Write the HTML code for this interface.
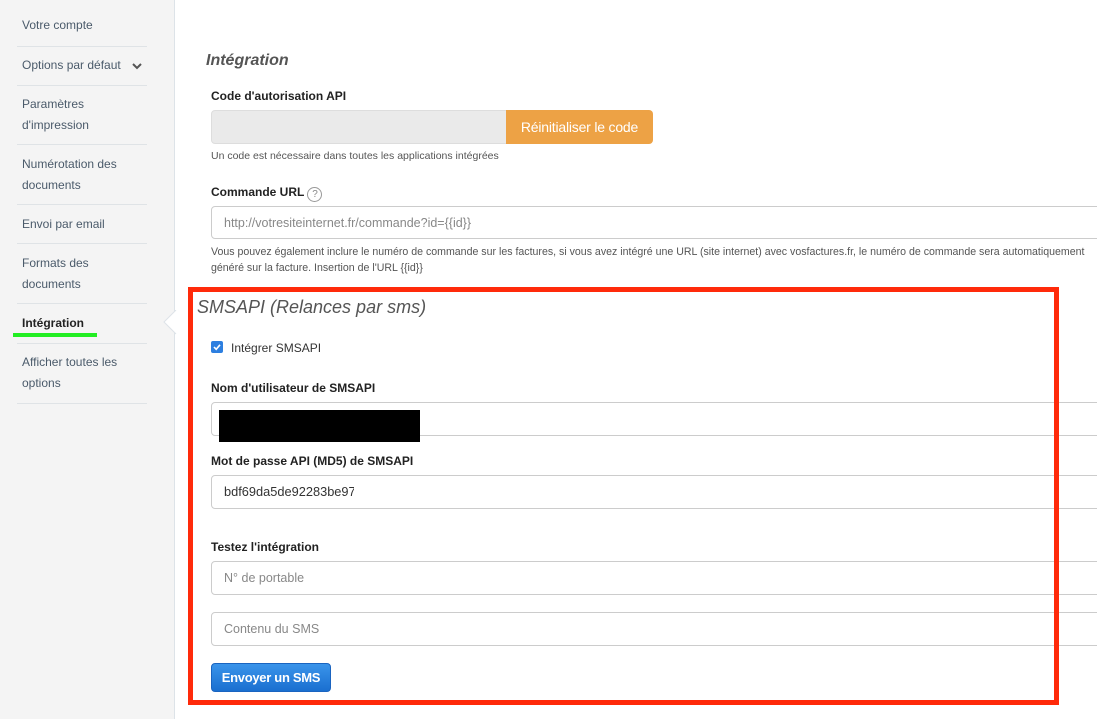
<!DOCTYPE html>
<html><head><meta charset="utf-8"><style>
*{box-sizing:border-box;margin:0;padding:0}
body{width:1097px;height:719px;overflow:hidden;background:#fff;font-family:"Liberation Sans",Arial,sans-serif;position:relative;color:#333}
.sb{position:absolute;left:0;top:0;width:175px;height:719px;background:#f4f4f4;border-right:1px solid #dde3e8}
.it{position:absolute;left:17px;width:130px;border-bottom:1px solid #dfe3e6;font-size:12px;color:#4a5a6a;line-height:21px;padding-left:5px;padding-top:1px}
.a{position:absolute}
.lbl{position:absolute;left:211px;font-size:12px;font-weight:bold;color:#222}
.inp{position:absolute;left:211px;width:900px;height:34px;border:1px solid #ccc;border-radius:4px;background:#fff;font-size:12px;color:#888;padding-left:12px;line-height:32px}
.help{position:absolute;left:211px;font-size:10px;color:#555;line-height:16px}
</style></head><body>
<div class="sb"></div>
<div class="it" style="top:14px;height:33px">Votre compte</div>
<div class="it" style="top:54px;height:32px">Options par défaut<svg style="position:absolute;left:114px;top:8px" width="12" height="8" viewBox="0 0 12 8"><path d="M2 2 L6 6 L10 2" stroke="#555" stroke-width="2" fill="none"/></svg></div>
<div class="it" style="top:93px;height:52px">Paramètres<br>d'impression</div>
<div class="it" style="top:153px;height:52px">Numérotation des<br>documents</div>
<div class="it" style="top:213px;height:31px">Envoi par email</div>
<div class="it" style="top:252px;height:52px">Formats des<br>documents</div>
<div class="it" style="top:312px;height:32px;font-weight:bold;color:#222">Intégration</div>
<div class="a" style="left:13px;top:333px;width:84px;height:4px;background:#22ee22"></div>
<div class="it" style="top:351px;height:53px">Afficher toutes les<br>options</div>
<svg class="a" style="left:163px;top:310px" width="14" height="26"><path d="M13 0 L1 12 L13 24" fill="#fff" stroke="#dde3e8"/></svg>

<div class="a" style="left:206px;top:52px;font-size:16px;font-weight:bold;font-style:italic;color:#555">Intégration</div>
<div class="lbl" style="top:89px">Code d'autorisation API</div>
<div class="a" style="left:211px;top:110px;width:296px;height:34px;background:#eaeaea;border:1px solid #ddd;border-radius:4px 0 0 4px"></div>
<div class="a" style="left:506px;top:110px;width:147px;height:34px;background:#eda245;border-radius:0 4px 4px 0;color:#fff;font-size:14px;line-height:34px;text-align:center;letter-spacing:-0.2px">Réinitialiser le code</div>
<div class="help" style="top:148px;font-size:10.5px">Un code est nécessaire dans toutes les applications intégrées</div>
<div class="lbl" style="top:185px">Commande URL <span style="display:inline-block;width:15px;height:15px;border:1px solid #999;border-radius:50%;font-size:10px;font-weight:normal;color:#888;text-align:center;line-height:13px;vertical-align:-1px">?</span></div>
<div class="inp" style="top:206px;height:33px;font-size:12.5px">http://votresiteinternet.fr/commande?id={{id}}</div>
<div class="help" style="top:244px;white-space:nowrap;font-size:10.6px">Vous pouvez également inclure le numéro de commande sur les factures, si vous avez intégré une URL (site internet) avec vosfactures.fr, le numéro de commande sera automatiquement<br>généré sur la facture. Insertion de l'URL {{id}}</div>

<div class="a" style="left:197px;top:297px;font-size:18px;font-style:italic;color:#555">SMSAPI (Relances par sms)</div>
<div class="a" style="left:211px;top:341px;width:12px;height:12px;background:#2d7fe0;border-radius:2px"><svg width="12" height="12" style="position:absolute;left:0;top:0"><path d="M3 6 L5.2 8.3 L9 3.8" stroke="#fff" stroke-width="1.6" fill="none"/></svg></div>
<div class="a" style="left:231px;top:341px;font-size:12px;color:#333">Intégrer SMSAPI</div>
<div class="lbl" style="top:381px">Nom d'utilisateur de SMSAPI</div>
<div class="inp" style="top:402px"></div>
<div class="a" style="left:219px;top:410px;width:201px;height:32px;background:#000"></div>
<div class="lbl" style="top:454px">Mot de passe API (MD5) de SMSAPI</div>
<div class="inp" style="top:475px;color:#333;font-size:12.8px">bdf69da5de92283be97</div>
<div class="a" style="left:354px;top:480px;width:60px;height:24px;background:#fff"></div>
<div class="lbl" style="top:540px">Testez l'intégration</div>
<div class="inp" style="top:561px;font-size:12.5px">N° de portable</div>
<div class="inp" style="top:612px;font-size:12.5px">Contenu du SMS</div>
<div class="a" style="left:211px;top:663px;width:120px;height:29px;background:linear-gradient(#3a94ea,#1a6fd0);border:1px solid #1a64c0;border-radius:4px;color:#fff;font-size:13px;font-weight:bold;line-height:27px;text-align:center;letter-spacing:-0.3px">Envoyer un SMS</div>

<div class="a" style="left:188px;top:287px;width:871px;height:418px;border:5px solid #ff2a0a"></div>
</body></html>
